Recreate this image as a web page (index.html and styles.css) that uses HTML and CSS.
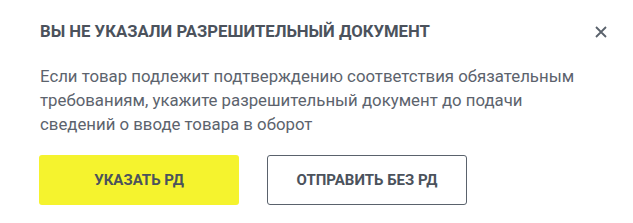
FILE: index.html
```html
<!DOCTYPE html>
<html lang="ru">
<head>
    <meta charset="UTF-8">
    <title>Разрешительный документ</title>
    <link rel="stylesheet" href="styles.css">
</head>
<body>
    <!-- окно предупреждения -->
    <div class="modal">
        <div class="modal-head">
            <h2 class="title">Вы не указали разрешительный документ</h2>
            <a href="javascript:;" class="close" aria-label="Закрыть">
                <svg width="12" height="12" viewBox="0 0 12 12">
                    <path d="M1 1L11 11M11 1L1 11" stroke="#5a626c" stroke-width="1.8" fill="none"/>
                </svg>
            </a>
        </div>
        <p class="text">Если товар подлежит подтверждению соответствия обязательным требованиям, укажите разрешительный документ до подачи сведений о вводе товара в оборот</p>
        <div class="btns">
            <a href="javascript:;" class="btn btn-yellow">Указать РД</a>
            <a href="javascript:;" class="btn btn-line">Отправить без РД</a>
        </div>
    </div>
</body>
</html>
```

FILE: styles.css
```css
*{
    margin: 0;
    padding: 0;
    box-sizing: border-box;
}
body{
    background: #fff;
    font-family: Roboto, sans-serif;
}
.modal{
    width: 633px;
    padding: 20px 26px 0 40px;
}
.modal-head{
    display: flex;
    justify-content: space-between;
    align-items: center;
    height: 24px;
}
.title{
    font-family: Roboto, sans-serif;
    font-size: 16.7px;
    font-weight: 700;
    text-transform: uppercase;
    color: #4b525c;
    line-height: 24px;
}
.close{
    display: flex;
    width: 12px;
    height: 12px;
}
.text{
    font-family: Roboto, sans-serif;
    margin-top: 20px;
    width: 548px;
    font-size: 16.8px;
    line-height: 24px;
    color: #5c636d;
}
.btns{
    display: flex;
    gap: 28px;
    margin-top: 19px;
    margin-left: -1px;
}
.btn{
    font-family: Roboto, sans-serif;
    display: flex;
    align-items: center;
    justify-content: center;
    width: 200px;
    height: 50px;
    font-size: 15px;
    font-weight: 700;
    text-transform: uppercase;
    text-decoration: none;
    color: #4b525c;
    border-radius: 3px;
}
.btn-yellow{
    background: #f5f32e;
}
.btn-line{
    border: 1px solid #5a626c;
}
```
